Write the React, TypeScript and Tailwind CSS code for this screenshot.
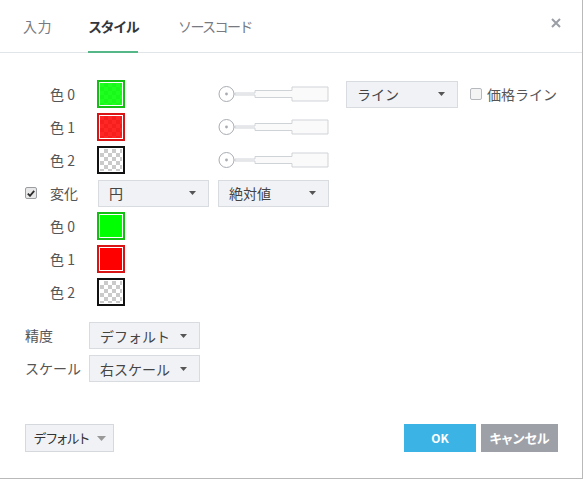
import React from "react";

const Arrow = () => (
  <svg width="7" height="4" viewBox="0 0 7 4" className="shrink-0">
    <path d="M0 0H7L3.5 4Z" fill="#555" />
  </svg>
);

const Select = ({ label, w = "w-[111px]" }: { label: string; w?: string }) => (
  <div
    className={`${w} h-[27px] bg-[#f1f2f6] border border-[#d8dce1] flex items-center justify-between pl-[10px] pr-[12px] text-[14px] text-[#444] leading-none`}
  >
    <span>{label}</span>
    <Arrow />
  </div>
);

const Checker = "bg-[conic-gradient(#cacaca_25%,#ffffff_0_50%,#cacaca_0_75%,#ffffff_0)] bg-[length:8px_8px]";

const Swatch = ({ kind }: { kind: "g" | "r" | "t" | "G" | "R" }) => {
  const border =
    kind === "g" || kind === "G"
      ? "border-[#12c012]"
      : kind === "r" || kind === "R"
      ? "border-[#d81414]"
      : "border-[#111111]";
  const fill =
    kind === "g"
      ? "bg-[rgba(0,255,0,0.88)]"
      : kind === "G"
      ? "bg-[#00ff00]"
      : kind === "r"
      ? "bg-[rgba(255,0,0,0.85)]"
      : kind === "R"
      ? "bg-[#ff0000]"
      : "bg-transparent";
  return (
    <div className={`w-[28px] h-[28px] border-2 ${border} p-px bg-white`}>
      <div className={`w-full h-full ${Checker}`}>
        <div className={`w-full h-full ${fill}`} />
      </div>
    </div>
  );
};

const Slider = () => (
  <svg width="112" height="20" viewBox="0 0 112 20" className="shrink-0">
    <path
      d="M17 9H37V6.5H74V3H110V17H74V13.5H37V11H17Z"
      fill="#fafafa"
      stroke="#cfd3d8"
      strokeWidth="1"
    />
    <circle cx="8.5" cy="10" r="7.5" fill="#fff" stroke="#a8acb2" strokeWidth="1" />
    <circle cx="8.5" cy="10" r="1.4" fill="#a8acb2" />
  </svg>
);

const Label = ({ t }: { t: string }) => (
  <div className="w-[47px] text-[14px] text-[#555]">{t}</div>
);

export default function App() {
  return (
    <div className="w-[583px] h-[479px] bg-white border-r border-b border-[#b9b9b9] flex flex-col font-['Noto_Sans_CJK_JP','Noto_Sans',sans-serif] text-[#4a4a4a]">
      {/* header */}
      <div className="h-[53px] border-b border-[#e1e4e8] flex items-stretch shrink-0 pl-[23px]">
        <div className="w-[65px] h-[52px] flex items-center text-[14px] text-[#777a80] whitespace-nowrap">
          <span className="tracking-[0.5px]">入力</span>
        </div>
        <div className="w-[90px] h-[52px] flex items-center text-[14px] font-bold text-[#33373c] whitespace-nowrap">
          <span className="relative h-[52px] flex items-center tracking-[-1.4px]">
            スタイル
            <span className="absolute left-0 right-0 bottom-[-1px] h-[2px] bg-[#55b687]" />
          </span>
        </div>
        <div className="h-[52px] flex items-center text-[14px] text-[#777a80] whitespace-nowrap tracking-[-1.6px]">
          ソースコード
        </div>
        <div className="ml-auto mr-[21px] mt-[18px]">
          <svg width="10" height="10" viewBox="0 0 10 10">
            <path d="M1 1L9 9M9 1L1 9" stroke="#9a9ea5" strokeWidth="2" />
          </svg>
        </div>
      </div>

      {/* body */}
      <div className="pl-[25px] pt-[27px] flex flex-col">
        <div className="flex flex-col gap-[5px]">
          <div className="h-[28px] flex items-center">
            <div className="w-[25px]" />
            <Label t="色 0" />
            <div className="w-[121px]">
              <Swatch kind="g" />
            </div>
            <Slider />
            <div className="ml-[16px]">
              <Select label="ライン" w="w-[112px]" />
            </div>
            <div className="ml-[12px] flex items-center gap-[5px]">
              <div className="w-[12px] h-[12px] rounded-[2px] border border-[#b5b8bd] bg-[#f4f4f4]" />
              <span className="text-[14px] text-[#555]">価格ライン</span>
            </div>
          </div>
          <div className="h-[28px] flex items-center">
            <div className="w-[25px]" />
            <Label t="色 1" />
            <div className="w-[121px]">
              <Swatch kind="r" />
            </div>
            <Slider />
          </div>
          <div className="h-[28px] flex items-center">
            <div className="w-[25px]" />
            <Label t="色 2" />
            <div className="w-[121px]">
              <Swatch kind="t" />
            </div>
            <Slider />
          </div>
          <div className="h-[28px] flex items-center">
            <div className="w-[25px]">
              <div className="w-[12px] h-[12px] rounded-[2px] border border-[#9a9da2] bg-[#e8e8e8] flex items-center justify-center">
                <svg width="8" height="7" viewBox="0 0 8 7">
                  <path d="M0.8 3.6L3 5.8L7.2 0.9" stroke="#2b2b2b" strokeWidth="1.8" fill="none" />
                </svg>
              </div>
            </div>
            <Label t="変化" />
            <div className="ml-px flex items-center gap-[9px]">
              <Select label="円" />
              <Select label="絶対値" />
            </div>
          </div>
          <div className="h-[28px] flex items-center">
            <div className="w-[25px]" />
            <Label t="色 0" />
            <Swatch kind="G" />
          </div>
          <div className="h-[28px] flex items-center">
            <div className="w-[25px]" />
            <Label t="色 1" />
            <Swatch kind="R" />
          </div>
          <div className="h-[28px] flex items-center">
            <div className="w-[25px]" />
            <Label t="色 2" />
            <Swatch kind="t" />
          </div>
        </div>

        <div className="mt-[16px] flex flex-col gap-[6px]">
          <div className="h-[27px] flex items-center">
            <div className="w-[64px] text-[14px] text-[#555]">精度</div>
            <Select label="デフォルト" />
          </div>
          <div className="h-[27px] flex items-center">
            <div className="w-[64px] text-[14px] text-[#555]">スケール</div>
            <Select label="右スケール" />
          </div>
        </div>
      </div>

      {/* footer */}
      <div className="mt-auto pl-[25px] pr-[24px] pb-[26px] flex items-center">
        <div className="w-[89px] h-[28px] bg-[#f1f2f6] border border-[#d5d9de] flex items-center pl-[8px] gap-[8px] text-[13px] text-[#333] [font-feature-settings:'palt']">
          <span>デフォルト</span>
          <svg width="9" height="5" viewBox="0 0 9 5">
            <path d="M0 0H9L4.5 5Z" fill="#999" />
          </svg>
        </div>
        <div className="ml-auto flex items-center gap-[5px]">
          <div className="w-[72px] h-[28px] bg-[#3bb4e5] text-white font-bold text-[12px] flex items-center justify-center">
            OK
          </div>
          <div className="w-[77px] h-[28px] bg-[#9da0a6] text-white font-bold text-[13px] flex items-center justify-center [font-feature-settings:'palt']">
            キャンセル
          </div>
        </div>
      </div>
    </div>
  );
}
